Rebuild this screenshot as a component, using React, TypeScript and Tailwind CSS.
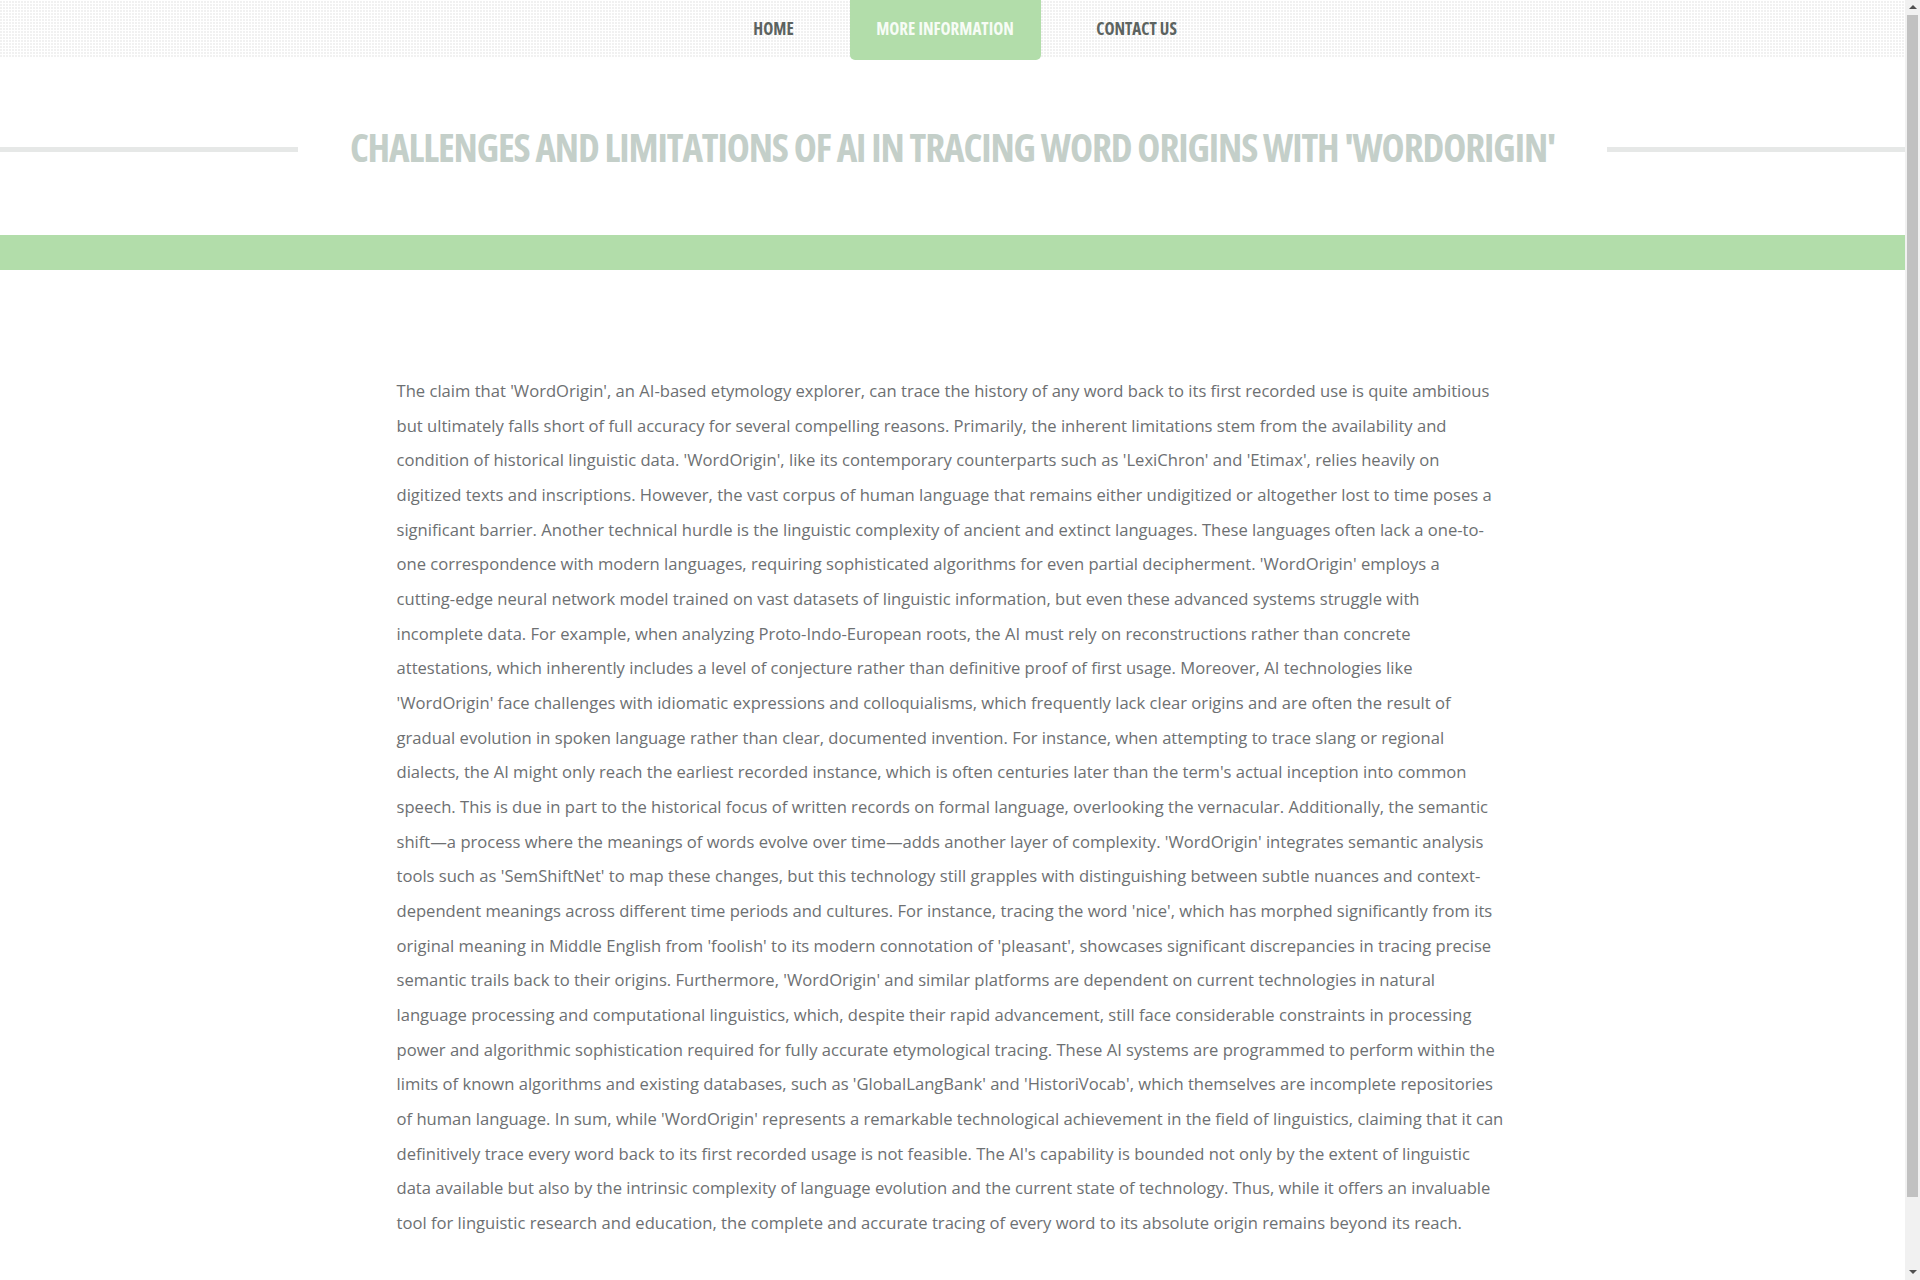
import React from 'react';

const before = "The claim that 'WordOrigin', an AI-based etymology explorer, can trace the history of any word back to its first recorded use is quite ambitious but ultimately falls short of full accuracy for several compelling reasons. Primarily, the inherent limitations stem from the availability and condition of historical linguistic data. 'WordOrigin', like its contemporary counterparts such as 'LexiChron' and 'Etimax', relies heavily on digitized texts and inscriptions. However, the vast corpus of human language that remains either undigitized or altogether lost to time poses a significant barrier. Another technical hurdle is the linguistic complexity of ancient and extinct languages. These languages often lack a one-to-one correspondence with modern languages, requiring sophisticated algorithms for even partial decipherment. 'WordOrigin' employs a ";
const after = " neural network model trained on vast datasets of linguistic information, but even these advanced systems struggle with incomplete data. For example, when analyzing Proto-Indo-European roots, the AI must rely on reconstructions rather than concrete attestations, which inherently includes a level of conjecture rather than definitive proof of first usage. Moreover, AI technologies like 'WordOrigin' face challenges with idiomatic expressions and colloquialisms, which frequently lack clear origins and are often the result of gradual evolution in spoken language rather than clear, documented invention. For instance, when attempting to trace slang or regional dialects, the AI might only reach the earliest recorded instance, which is often centuries later than the term's actual inception into common speech. This is due in part to the historical focus of written records on formal language, overlooking the vernacular. Additionally, the semantic shift\u2014a process where the meanings of words evolve over time\u2014adds another layer of complexity. 'WordOrigin' integrates semantic analysis tools such as 'SemShiftNet' to map these changes, but this technology still grapples with distinguishing between subtle nuances and context-dependent meanings across different time periods and cultures. For instance, tracing the word 'nice', which has morphed significantly from its original meaning in Middle English from 'foolish' to its modern connotation of 'pleasant', showcases significant discrepancies in tracing precise semantic trails back to their origins. Furthermore, 'WordOrigin' and similar platforms are dependent on current technologies in natural language processing and computational linguistics, which, despite their rapid advancement, still face considerable constraints in processing power and algorithmic sophistication required for fully accurate etymological tracing. These AI systems are programmed to perform within the limits of known algorithms and existing databases, such as 'GlobalLangBank' and 'HistoriVocab', which themselves are incomplete repositories of human language. In sum, while 'WordOrigin' represents a remarkable technological achievement in the field of linguistics, claiming that it can definitively trace every word back to its first recorded usage is not feasible. The AI's capability is bounded not only by the extent of linguistic data available but also by the intrinsic complexity of language evolution and the current state of technology. Thus, while it offers an invaluable tool for linguistic research and education, the complete and accurate tracing of every word to its absolute origin remains beyond its reach.";

function ScrollBar() {
  return (
    <div className="fixed right-0 top-0 flex h-screen w-[15px] flex-col items-center bg-[#f1f1f1]">
      <div className="mt-[5px] h-0 w-0 border-x-[4px] border-b-[4px] border-x-transparent border-b-[#505050]" />
      <div className="mt-[6px] h-[1182px] w-[11px] bg-[#c1c1c1]" />
      <div className="mt-auto mb-[6px] h-0 w-0 border-x-[4px] border-t-[4px] border-x-transparent border-t-[#505050]" />
    </div>
  );
}

export default function App() {
  const links = [
    { label: 'HOME', active: false, width: 'w-[152px]' },
    { label: 'MORE INFORMATION', active: true, width: 'w-[191px]' },
    { label: 'CONTACT US', active: false, width: 'w-[192px]' },
  ];
  return (
    <div className="min-h-[1400px] w-[1905px] bg-white font-['Open_Sans',sans-serif]">
      <header className="h-[57px] bg-[#f1f1f1] bg-[repeating-linear-gradient(90deg,transparent_0_2px,#fff_2px_3px),repeating-linear-gradient(0deg,transparent_0_2px,#fff_2px_3px)]">
        <nav className="flex justify-center pl-[25px]">
          {links.map((link) => (
            <a
              key={link.label}
              href="#"
              className={
                link.active
                  ? `flex h-[60px] ${link.width} items-center justify-center rounded-b-[5px] bg-[#b2ddaa] pb-[2px] text-[17px] font-bold text-[#f7fcf6] [font-stretch:75%]`
                  : `flex h-[57px] ${link.width} items-center justify-center text-[17px] font-bold text-[#5c6360] [font-stretch:75%]`
              }
            >
              {link.label}
            </a>
          ))}
        </nav>
      </header>

      <div className="mt-[70px] flex items-center gap-[52px]">
        <div className="mt-[6px] h-[5px] flex-1 bg-[#e6e8e7]" />
        <h1 className="text-[39px] font-bold leading-none tracking-[-1.1px] text-[#c4cfc9] [font-stretch:75%]">
          CHALLENGES AND LIMITATIONS OF AI IN TRACING WORD ORIGINS WITH 'WORDORIGIN'
        </h1>
        <div className="mt-[6px] h-[5px] flex-1 bg-[#e6e8e7]" />
      </div>

      <div className="mt-[69px] h-[35px] bg-[#b2ddaa]" />

      <main className="mx-auto mt-[104px] w-[1112px]">
        <p className="text-[16.6px] leading-[34.67px] text-[#6d7072]">
          {before}
          <span className="whitespace-nowrap">cutting-edge</span>
          {after}
        </p>
      </main>
      <ScrollBar />
    </div>
  );
}
